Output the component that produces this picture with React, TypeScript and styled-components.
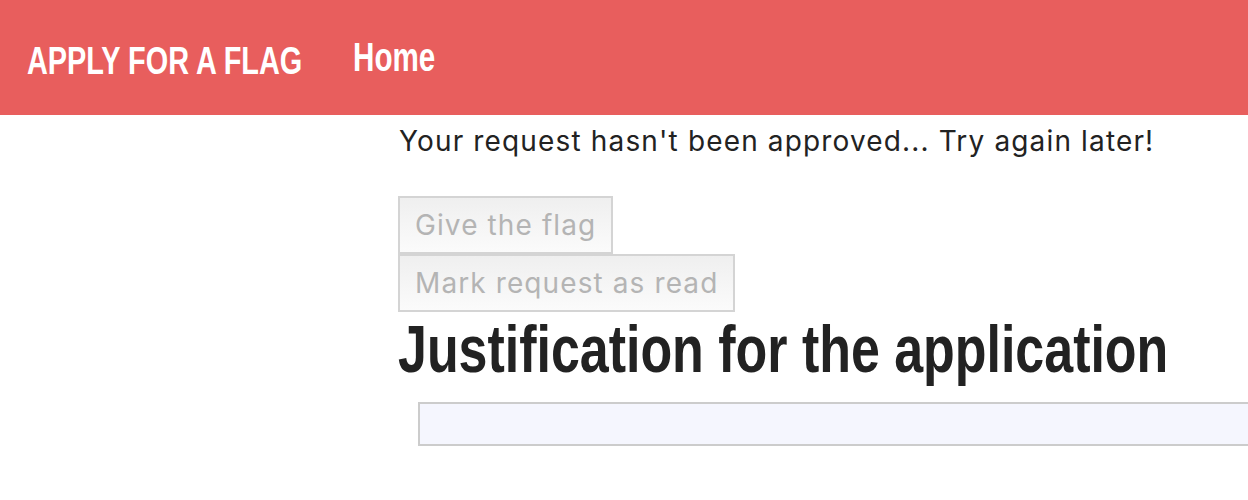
import React from "react";
import styled, { createGlobalStyle } from "styled-components";

const Global = createGlobalStyle`
  html, body { margin: 0; padding: 0; background: #fff; overflow-x: hidden; }
  * { box-sizing: border-box; }
`;

const Header = styled.header`
  height: 115px;
  background: #e85e5d;
  display: flex;
  align-items: center;
  padding-left: 27px;
  gap: 42px;
  font-family: "Liberation Sans", Arial, sans-serif;
  color: #fff;
`;

/* condensed display face: Arial Bold narrowed horizontally */
const Brand = styled.div`
  width: 284px;
  font-size: 39px;
  font-weight: 700;
  white-space: nowrap;
  margin-top: 6px;
  transform: scaleX(0.74);
  transform-origin: left center;
`;

const NavLink = styled.a`
  font-size: 40px;
  font-weight: 700;
  color: #fff;
  text-decoration: none;
  white-space: nowrap;
  transform: scaleX(0.74);
  transform-origin: left center;
`;

const Main = styled.main`
  padding-left: 398px;
  display: flex;
  flex-direction: column;
  align-items: flex-start;
`;

const Message = styled.p`
  margin: 10px 0 0 1px;
  font-family: Inter, "Liberation Sans", Arial, sans-serif;
  font-size: 28px;
  line-height: 32px;
  letter-spacing: 1.15px;
  color: #222;
  white-space: nowrap;
`;

const Actions = styled.div`
  display: flex;
  flex-direction: column;
  align-items: flex-start;
  margin-top: 39px;
`;

const Button = styled.button`
  font-family: Inter, "Liberation Sans", Arial, sans-serif;
  font-size: 28px;
  line-height: 32px;
  letter-spacing: 1.1px;
  padding: 11px 15px;
  color: #b4b4b4;
  background: linear-gradient(#efefef, #fbfbfb);
  border: 2px solid #d4d4d4;
  border-radius: 0;
  margin: 0;
`;

const Heading = styled.h1`
  margin: 4px 0 0 0;
  font-family: "Liberation Sans", Arial, sans-serif;
  font-size: 67px;
  line-height: 66px;
  font-weight: 700;
  color: #222;
  white-space: nowrap;
  transform: scaleX(0.775);
  transform-origin: left center;
`;

const Field = styled.div`
  margin: 20px 0 0 20px;
  width: 900px;
  height: 44px;
  background: #f5f6fe;
  border: 2px solid #cccccc;
`;

export default function App() {
  return (
    <>
      <Global />
      <Header>
        <Brand>APPLY FOR A FLAG</Brand>
        <NavLink href="#">Home</NavLink>
      </Header>
      <Main>
        <Message>Your request hasn't been approved... Try again later!</Message>
        <Actions>
          <Button disabled>Give the flag</Button>
          <Button disabled>Mark request as read</Button>
        </Actions>
        <Heading>Justification for the application</Heading>
        <Field />
      </Main>
    </>
  );
}
